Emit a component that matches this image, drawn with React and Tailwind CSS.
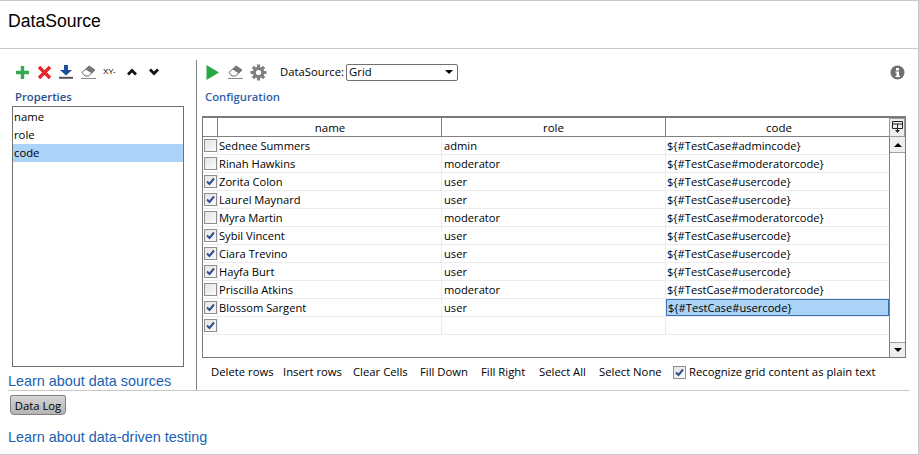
const ui = "font-['Open_Sans',sans-serif]";

const rows = [
  { name: "Sednee Summers", role: "admin", code: "${#TestCase#admincode}", on: false },
  { name: "Rinah Hawkins", role: "moderator", code: "${#TestCase#moderatorcode}", on: false },
  { name: "Zorita Colon", role: "user", code: "${#TestCase#usercode}", on: true },
  { name: "Laurel Maynard", role: "user", code: "${#TestCase#usercode}", on: true },
  { name: "Myra Martin", role: "moderator", code: "${#TestCase#moderatorcode}", on: false },
  { name: "Sybil Vincent", role: "user", code: "${#TestCase#usercode}", on: true },
  { name: "Ciara Trevino", role: "user", code: "${#TestCase#usercode}", on: true },
  { name: "Hayfa Burt", role: "user", code: "${#TestCase#usercode}", on: true },
  { name: "Priscilla Atkins", role: "moderator", code: "${#TestCase#moderatorcode}", on: false },
  { name: "Blossom Sargent", role: "user", code: "${#TestCase#usercode}", on: true, selected: true },
  { name: "", role: "", code: "", on: true },
];

const actions = [
  { label: "Delete rows", width: "w-[72px]" },
  { label: "Insert rows", width: "w-[70px]" },
  { label: "Clear Cells", width: "w-[67px]" },
  { label: "Fill Down", width: "w-[61px]" },
  { label: "Fill Right", width: "w-[58px]" },
  { label: "Select All", width: "w-[60px]" },
  { label: "Select None", width: "w-[74px]" },
];

function Eraser() {
  return (
    <svg width="15" height="14" viewBox="0 0 15 14" className="shrink-0">
      <path d="M1 7.5 8 1 14 5 7.5 11 4 11Z" fill="#fff" stroke="#666" strokeWidth="1" />
      <path d="M8 1 14 5 10.5 8.3 4.3 4.2Z" fill="#777" />
      <path d="M0 13.5H15" stroke="#888" strokeWidth="1" />
    </svg>
  );
}

function Gear() {
  return (
    <svg width="17" height="17" viewBox="0 0 17 17" className="shrink-0">
      <path d="M8.5 .5V16.5M.5 8.5H16.5M2.9 2.9 14.1 14.1M14.1 2.9 2.9 14.1" stroke="#808080" strokeWidth="3.2" />
      <circle cx="8.5" cy="8.5" r="5.8" fill="#808080" />
      <circle cx="8.5" cy="8.5" r="2.6" fill="#fff" />
    </svg>
  );
}

function Check({ on }) {
  return (
    <span className="flex h-[13px] w-[13px] shrink-0 items-center justify-center border border-[#8e8f8f] bg-[linear-gradient(135deg,#e4e4e4,#fbfbfb)]">
      {on && (
        <svg width="9" height="9" viewBox="0 0 9 9">
          <path d="M1 4.5 3.5 7 8 1.5" fill="none" stroke="#2f4f8f" strokeWidth="2" />
        </svg>
      )}
    </span>
  );
}

function Scrollbar() {
  return (
    <div className="flex w-[16px] shrink-0 flex-col border-l border-[#808080] bg-white">
      <div className="flex h-[16px] items-center justify-center border-b border-[#a0a0a0] bg-[#efefef]">
        <span className="h-0 w-0 border-x-[4px] border-b-[4px] border-x-transparent border-b-black" />
      </div>
      <div className="flex-1" />
      <div className="flex h-[15px] items-center justify-center border-t border-[#a0a0a0] bg-[#efefef]">
        <span className="h-0 w-0 border-x-[4px] border-t-[4px] border-x-transparent border-t-black" />
      </div>
    </div>
  );
}

function Grid() {
  return (
    <div className="flex h-[242px] w-[704px] flex-col border border-t-2 border-[#7a7a7a]">
      <div className="flex min-h-0 flex-1">
        <div className="min-w-0 flex-1">
          <div className="flex h-[19px] border-b border-[#808080] text-center text-[11.5px]">
            <div className="w-[15px] border-r border-[#808080]" />
            <div className="w-[224px] border-r border-[#808080] pl-[1px] leading-[20px]">name</div>
            <div className="w-[224px] border-r border-[#808080] leading-[20px]">role</div>
            <div className="flex-1 pl-[3px] leading-[20px]">code</div>
          </div>
          {rows.map((row, i) => (
            <div key={i} className="flex h-[18px] border-b border-[#ececec] text-[11.15px] leading-[17px]">
              <div className="flex w-[15px] items-center justify-center border-r border-[#ececec] pl-px">
                <Check on={row.on} />
              </div>
              <div className="w-[224px] border-r border-[#ececec] pl-[1px]">{row.name}</div>
              <div className="w-[224px] border-r border-[#ececec] pl-[2px]">{row.role}</div>
              <div className={row.selected ? "flex-1 border border-[#3d6fb4] bg-[#abd2f7] pl-px leading-[15px]" : "flex-1 pl-[1px]"}>
                {row.code}
              </div>
            </div>
          ))}
        </div>
        <div className="flex w-[16px] shrink-0 flex-col">
          <div className="flex h-[19px] items-center justify-center border border-[#9a9a9a] bg-[#eeeeee]">
            <svg width="11" height="13" viewBox="0 0 11 13">
              <path d="M.5.5H10.5V7.5H.5ZM.5 3H10.5M5.5 3V9" fill="none" stroke="#222" />
              <path d="M3 9H8L5.5 12Z" fill="#222" />
            </svg>
          </div>
          <div className="flex min-h-0 flex-1">
            <Scrollbar />
          </div>
        </div>
      </div>
    </div>
  );
}

export default function App() {
  return (
    <div className={`${ui} h-[455px] w-[919px] overflow-hidden bg-white text-[11.3px] text-black`}>
      <div className="h-[455px] w-[919px] border-t border-r border-b border-[#c8c8c8]">
        <div className="h-[48px] border-b border-[#c8c8c8] pl-[8px] pt-[8px] font-['Liberation_Sans',sans-serif] text-[17.6px] leading-[24px]">
          DataSource
        </div>

        <div className="mx-[8px] flex h-[342px] w-[902px] border-b border-[#c8c8c8] pt-[11px]">
          <div className="-ml-px w-[190px] shrink-0 border-r border-[#808080] pl-[5px]">
            <div className="flex h-[24px] items-center pl-[3px]">
              <svg width="15" height="15" viewBox="0 0 15 15" className="shrink-0">
                <path d="M7.5 1V14M1 7.5H14" stroke="#35a94f" strokeWidth="3.4" />
              </svg>
              <svg width="15" height="15" viewBox="0 0 15 15" className="ml-[7px] shrink-0">
                <path d="M2 2 13 13M13 2 2 13" stroke="#e6262b" strokeWidth="3.4" />
              </svg>
              <svg width="14" height="14" viewBox="0 0 14 14" className="ml-[7px] shrink-0">
                <path d="M5 0H9V5H13L7 10.5 1 5H5Z" fill="#1e4e9c" />
                <path d="M0 12.8H14" stroke="#555" strokeWidth="2" />
              </svg>
              <span className="ml-[8px]"><Eraser /></span>
              <span className="ml-[7px] w-[14px] whitespace-nowrap font-['Liberation_Sans',sans-serif] text-[8px] leading-none">XY-</span>
              <svg width="12" height="8" viewBox="0 0 12 8" className="ml-[9px] shrink-0">
                <path d="M2 6.5 6 2.5 10 6.5" fill="none" stroke="#111" strokeWidth="2.8" />
              </svg>
              <svg width="12" height="8" viewBox="0 0 12 8" className="ml-[10px] shrink-0">
                <path d="M2 1.5 6 5.5 10 1.5" fill="none" stroke="#111" strokeWidth="2.8" />
              </svg>
            </div>
            <div className="mt-[5px] pl-[3px] font-semibold leading-[15px] text-[#2d4f8f]">Properties</div>
            <div className="mt-[2px] h-[261px] w-[172px] border border-[#707070] pt-[1px] leading-[18px]">
              <div className="pl-[1px]">name</div>
              <div className="pl-[1px]">role</div>
              <div className="bg-[#abd2f7] pl-[1px]">code</div>
            </div>
            <a className="-ml-[4px] mt-[5px] block whitespace-nowrap font-['Liberation_Sans',sans-serif] text-[14.4px] leading-[18px] text-[#1a5fb0]">
              Learn about data sources
            </a>
          </div>

          <div className="min-w-0 flex-1 pl-[5px]">
            <div className="relative flex h-[24px] items-center pl-[4px]">
              <svg width="13" height="15" viewBox="0 0 13 15" className="mr-[9px] shrink-0">
                <path d="M.5 0 13 7.5 .5 15Z" fill="#28a745" />
              </svg>
              <Eraser />
              <span className="ml-[7px]"><Gear /></span>
              <span className="ml-[13px]">DataSource:</span>
              <div className="ml-[2px] flex h-[17px] w-[112px] items-center justify-between rounded-[2px] border border-[#707070] pl-[2px] pr-[4px] leading-[14px]">
                Grid
                <span className="h-0 w-0 border-x-[4px] border-t-[4px] border-x-transparent border-t-black" />
              </div>
              <svg width="15" height="15" viewBox="0 0 15 15" className="absolute right-[5px] top-[5px]">
                <circle cx="7.5" cy="7.5" r="7" fill="#707070" />
                <path d="M6 3h3v2.4H6ZM5.5 6.5H9v4.2h1V12H5.5v-1.3h1V7.8h-1Z" fill="#fff" />
              </svg>
            </div>
            <div className="mt-[5px] pl-[3px] font-semibold leading-[15px] text-[#2f5fa8]">Configuration</div>
            <div className="mt-[12px]">
              <Grid />
            </div>
            <div className="mt-[5px] flex items-center whitespace-nowrap pl-[9px] leading-[18px]">
              {actions.map((action) => (
                <span key={action.label} className={`${action.width} shrink-0`}>{action.label}</span>
              ))}
              <span className="mr-[3px]"><Check on /></span>
              Recognize grid content as plain text
            </div>
          </div>
        </div>

        <div className="pl-[10px] pt-[4px]">
          <span className="inline-block h-[20px] w-[56px] rounded-b-[4px] rounded-t-[2px] border border-[#808080] bg-[linear-gradient(#d6d6d6,#b4b4b4)] text-center leading-[19px]">
            Data Log
          </span>
        </div>
        <a className="ml-[8px] mt-[12px] block font-['Liberation_Sans',sans-serif] text-[14.4px] leading-[20px] text-[#1a5fb0]">
          Learn about data-driven testing
        </a>
      </div>
    </div>
  );
}
